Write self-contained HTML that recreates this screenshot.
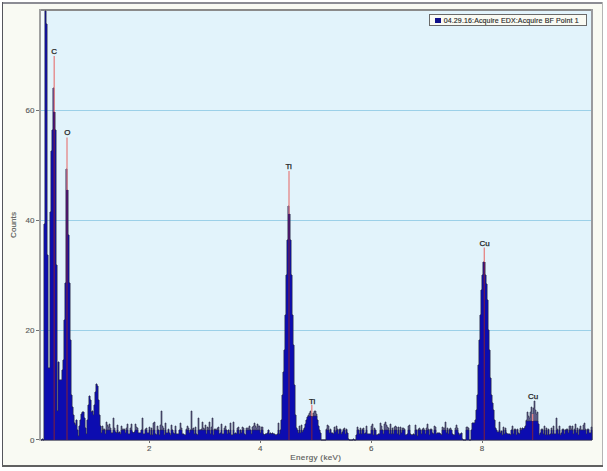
<!DOCTYPE html>
<html><head><meta charset="utf-8"><style>
html,body{margin:0;padding:0;background:#fff;}
body{width:607px;height:471px;position:relative;overflow:hidden;font-family:"Liberation Sans",sans-serif;}
svg{position:absolute;left:0;top:0;}
</style></head><body>
<svg width="607" height="471" viewBox="0 0 607 471" shape-rendering="crispEdges">
<rect x="2" y="2" width="601" height="465" fill="#f9faf3"/>
<rect x="2" y="2" width="601" height="2" fill="#8c8c94"/>
<rect x="2" y="2" width="1" height="465" fill="#55555c"/>
<rect x="602" y="2" width="1" height="465" fill="#b4b4b4"/>
<rect x="2" y="465" width="601" height="2" fill="#606060"/>
<rect x="41" y="11" width="550" height="429" fill="#e2f3fb"/>
<rect x="39" y="9" width="554" height="2" fill="#8a8a8a"/>
<rect x="39" y="9" width="2" height="431" fill="#a0a0a0"/>
<rect x="591" y="9" width="2" height="431" fill="#9a9a9e"/>
<rect x="41" y="11" width="3" height="429" fill="#f4fbfd"/>
<g fill="#9cd0e8"><rect x="41" y="110" width="550" height="1"/><rect x="41" y="220" width="550" height="1"/><rect x="41" y="330" width="550" height="1"/></g>
<g fill="#707070"><rect x="36" y="110" width="3" height="1"/><rect x="36" y="220" width="3" height="1"/><rect x="36" y="330" width="3" height="1"/><rect x="36" y="439" width="3" height="1"/>
<rect x="149" y="440" width="1" height="3"/><rect x="260" y="440" width="1" height="3"/><rect x="371" y="440" width="1" height="3"/><rect x="482" y="440" width="1" height="3"/></g>
<rect x="39" y="440" width="553" height="1" fill="#c4c4c4"/>
<path d="M41,440V440H42V439H43V440H44V224H45V11H46V24H47V255H48V368H49V368H50V212H51V151H52V130H53V88H54V112H55V130H56V265H57V411H58V362H59V380H60V380H61V380H62V370H63V360H64V320H65V283H66V169H67V190H68V235H69V283H70V340H71V395H72V407H73V415H74V423H75V425H76V420H77V430H78V436H79V426H80V420H81V414H82V412H83V412H84V418H85V428H86V434H87V420H88V405H89V396H90V400H91V412H92V411H93V415H94V405H95V392H96V384H97V386H98V400H99V415H100V426H101V433H102V426H103V429H104V429H105V434H106V422H107V425H108V427H109V424H110V428H111V433H112V433H113V418H114V428H115V432H116V433H117V425H118V433H119V432H120V434H121V426H122V429H123V429H124V429H125V433H126V428H127V424H128V434H129V434H130V428H131V424H132V432H133V433H134V432H135V424H136V427H137V428H138V433H139V433H140V433H141V430H142V418H143V434H144V434H145V429H146V428H147V433H148V433H149V427H150V435H151V428H152V435H153V423H154V422H155V434H156V435H157V426H158V430H159V435H160V425H161V411H162V426H163V428H164V435H165V423H166V433H167V433H168V429H169V433H170V435H171V425H172V430H173V433H174V434H175V426H176V434H177V434H178V434H179V430H180V423H181V428H182V434H183V434H184V435H185V435H186V429H187V426H188V428H189V433H190V430H191V411H192V429H193V428H194V434H195V427H196V434H197V435H198V418H199V430H200V430H201V429H202V422H203V428H204V429H205V425H206V434H207V427H208V428H209V422H210V434H211V427H212V418H213V435H214V429H215V429H216V430H217V428H218V427H219V434H220V433H221V424H222V434H223V434H224V428H225V426H226V430H227V434H228V430H229V433H230V423H231V435H232V435H233V422H234V434H235V433H236V434H237V428H238V427H239V434H240V430H241V433H242V427H243V428H244V434H245V435H246V428H247V428H248V428H249V426H250V430H251V434H252V427H253V426H254V423H255V426H256V428H257V424H258V426H259V426H260V433H261V427H262V427H263V434H264V435H265V434H266V434H267V433H268V430H269V434H270V433H271V434H272V433H273V434H274V434H275V435H276V435H277V434H278V423H279V434H280V430H281V420H282V395H283V372H284V350H285V315H286V275H287V240H288V206H289V214H290V240H291V275H292V315H293V345H294V385H295V415H296V428H297V430H298V433H299V426H300V433H301V425H302V432H303V430H304V428H305V424H306V420H307V417H308V415H309V413H310V411H311V413H312V417H313V413H314V411H315V411H316V414H317V420H318V426H319V430H320V433H321V440H322V440H323V440H324V440H325V440H326V429H327V425H328V426H329V433H330V429H331V433H332V433H333V434H334V427H335V432H336V426H337V429H338V434H339V429H340V429H341V434H342V432H343V429H344V428H345V434H346V429H347V433H348V439H349V440H350V440H351V440H352V440H353V439H354V440H355V440H356V435H357V427H358V430H359V434H360V428H361V434H362V429H363V428H364V434H365V433H366V426H367V434H368V434H369V434H370V434H371V426H372V424H373V435H374V428H375V430H376V435H377V435H378V434H379V434H380V423H381V426H382V430H383V434H384V424H385V422H386V425H387V427H388V428H389V434H390V424H391V434H392V428H393V434H394V427H395V426H396V427H397V434H398V427H399V435H400V427H401V433H402V428H403V428H404V429H405V435H406V435H407V434H408V426H409V425H410V434H411V435H412V435H413V434H414V435H415V425H416V430H417V436H418V429H419V428H420V430H421V434H422V429H423V428H424V430H425V434H426V428H427V424H428V429H429V435H430V429H431V429H432V433H433V434H434V426H435V427H436V434H437V433H438V433H439V433H440V434H441V435H442V427H443V428H444V428H445V422H446V433H447V428H448V434H449V429H450V428H451V430H452V434H453V435H454V435H455V428H456V425H457V428H458V433H459V435H460V434H461V433H462V439H463V440H464V440H465V440H466V427H467V427H468V428H469V440H470V440H471V430H472V423H473V423H474V423H475V420H476V410H477V395H478V365H479V340H480V315H481V290H482V275H483V262H484V262H485V275H486V284H487V300H488V330H489V350H490V378H491V395H492V403H493V410H494V420H495V428H496V430H497V432H498V432H499V422H500V433H501V431H502V435H503V427H504V434H505V428H506V433H507V434H508V434H509V434H510V435H511V430H512V426H513V434H514V429H515V429H516V435H517V429H518V433H519V434H520V428H521V430H522V428H523V429H524V428H525V426H526V420H527V412H528V416H529V418H530V412H531V407H532V414H533V408H534V401H535V410H536V414H537V412H538V424H539V435H540V433H541V429H542V429H543V434H544V426H545V435H546V428H547V435H548V429H549V435H550V434H551V428H552V434H553V426H554V434H555V434H556V418H557V429H558V434H559V426H560V435H561V433H562V429H563V429H564V434H565V430H566V429H567V429H568V433H569V426H570V426H571V429H572V426H573V434H574V429H575V424H576V433H577V428H578V435H579V429H580V426H581V430H582V430H583V425H584V423H585V429H586V434H587V429H588V429H589V433H590V433H591V427H592V440Z" fill="#5a5a86" stroke="#2e2e46" stroke-width="0.6" shape-rendering="geometricPrecision"/>
<path d="M41,440V440H42V439H43V440H44V224H45V11H46V24H47V255H48V368H49V368H50V212H51V151H52V130H53V88H54V112H55V130H56V265H57V411H58V362H59V380H60V380H61V380H62V370H63V360H64V320H65V283H66V169H67V190H68V235H69V283H70V340H71V395H72V407H73V415H74V423H75V425H76V420H77V430H78V436H79V426H80V420H81V414H82V412H83V412H84V418H85V428H86V434H87V420H88V405H89V396H90V400H91V412H92V411H93V415H94V405H95V392H96V384H97V386H98V400H99V415H100V426H101V433H102V430H103V430H104V430H105V434H106V430H107V430H108V430H109V430H110V430H111V433H112V433H113V430H114V430H115V432H116V433H117V430H118V433H119V432H120V434H121V430H122V430H123V430H124V430H125V433H126V430H127V430H128V434H129V434H130V430H131V430H132V432H133V433H134V432H135V430H136V430H137V430H138V433H139V433H140V433H141V430H142V430H143V434H144V434H145V430H146V430H147V433H148V433H149V430H150V435H151V430H152V435H153V430H154V430H155V434H156V435H157V430H158V430H159V435H160V430H161V430H162V430H163V430H164V435H165V430H166V433H167V433H168V430H169V433H170V435H171V430H172V430H173V433H174V434H175V430H176V434H177V434H178V434H179V430H180V430H181V430H182V434H183V434H184V435H185V435H186V430H187V430H188V430H189V433H190V430H191V430H192V430H193V430H194V434H195V430H196V434H197V435H198V430H199V430H200V430H201V430H202V430H203V430H204V430H205V430H206V434H207V430H208V430H209V430H210V434H211V430H212V430H213V435H214V430H215V430H216V430H217V430H218V430H219V434H220V433H221V430H222V434H223V434H224V430H225V430H226V430H227V434H228V430H229V433H230V430H231V435H232V435H233V430H234V434H235V433H236V434H237V430H238V430H239V434H240V430H241V433H242V430H243V430H244V434H245V435H246V430H247V430H248V430H249V430H250V430H251V434H252V430H253V430H254V430H255V430H256V430H257V430H258V430H259V430H260V433H261V430H262V430H263V434H264V435H265V434H266V434H267V433H268V430H269V434H270V433H271V434H272V433H273V434H274V434H275V435H276V435H277V434H278V430H279V434H280V430H281V420H282V395H283V372H284V350H285V315H286V275H287V240H288V206H289V214H290V240H291V275H292V315H293V345H294V385H295V415H296V428H297V430H298V433H299V430H300V433H301V430H302V432H303V430H304V428H305V424H306V420H307V417H308V416H309V416H310V416H311V416H312V417H313V416H314V416H315V416H316V416H317V420H318V426H319V430H320V433H321V440H322V440H323V440H324V440H325V440H326V430H327V430H328V430H329V433H330V430H331V433H332V433H333V434H334V430H335V432H336V430H337V430H338V434H339V430H340V430H341V434H342V432H343V430H344V430H345V434H346V430H347V433H348V439H349V440H350V440H351V440H352V440H353V439H354V440H355V440H356V435H357V430H358V430H359V434H360V430H361V434H362V430H363V430H364V434H365V433H366V430H367V434H368V434H369V434H370V434H371V430H372V430H373V435H374V430H375V430H376V435H377V435H378V434H379V434H380V430H381V430H382V430H383V434H384V430H385V430H386V430H387V430H388V430H389V434H390V430H391V434H392V430H393V434H394V430H395V430H396V430H397V434H398V430H399V435H400V430H401V433H402V430H403V430H404V430H405V435H406V435H407V434H408V430H409V430H410V434H411V435H412V435H413V434H414V435H415V430H416V430H417V436H418V430H419V430H420V430H421V434H422V430H423V430H424V430H425V434H426V430H427V430H428V430H429V435H430V430H431V430H432V433H433V434H434V430H435V430H436V434H437V433H438V433H439V433H440V434H441V435H442V430H443V430H444V430H445V430H446V433H447V430H448V434H449V430H450V430H451V430H452V434H453V435H454V435H455V430H456V430H457V430H458V433H459V435H460V434H461V433H462V439H463V440H464V440H465V440H466V430H467V430H468V430H469V440H470V440H471V430H472V423H473V423H474V423H475V420H476V410H477V395H478V365H479V340H480V315H481V290H482V275H483V262H484V262H485V275H486V284H487V300H488V330H489V350H490V378H491V395H492V403H493V410H494V420H495V428H496V430H497V432H498V432H499V430H500V433H501V431H502V435H503V430H504V434H505V430H506V433H507V434H508V434H509V434H510V435H511V430H512V430H513V434H514V430H515V430H516V435H517V430H518V433H519V434H520V430H521V430H522V428H523V429H524V428H525V426H526V421H527V421H528V421H529V421H530V421H531V421H532V421H533V421H534V421H535V421H536V421H537V421H538V424H539V435H540V433H541V430H542V430H543V434H544V430H545V435H546V430H547V435H548V430H549V435H550V434H551V430H552V434H553V430H554V434H555V434H556V430H557V430H558V434H559V430H560V435H561V433H562V430H563V430H564V434H565V430H566V430H567V430H568V433H569V430H570V430H571V430H572V430H573V434H574V430H575V430H576V433H577V430H578V435H579V430H580V430H581V430H582V430H583V430H584V430H585V430H586V434H587V430H588V430H589V433H590V433H591V430H592V440Z" fill="#0c0cb0" stroke="#24244a" stroke-width="0.5" shape-rendering="geometricPrecision"/>
<g stroke-width="1.3" shape-rendering="geometricPrecision"><line x1="54.2" y1="56" x2="54.2" y2="112" stroke="#e58484"/><line x1="54.2" y1="112" x2="54.2" y2="440" stroke="#6a1c50"/><line x1="67.0" y1="137.5" x2="67.0" y2="190" stroke="#e58484"/><line x1="67.0" y1="190" x2="67.0" y2="440" stroke="#6a1c50"/><line x1="289" y1="171" x2="289" y2="214" stroke="#e58484"/><line x1="289" y1="214" x2="289" y2="440" stroke="#6a1c50"/><line x1="311.8" y1="405" x2="311.8" y2="416" stroke="#e58484"/><line x1="311.8" y1="416" x2="311.8" y2="440" stroke="#6a1c50"/><line x1="484.3" y1="247.5" x2="484.3" y2="262" stroke="#e58484"/><line x1="484.3" y1="262" x2="484.3" y2="440" stroke="#6a1c50"/><line x1="532.6" y1="414" x2="532.6" y2="421" stroke="#e58484"/><line x1="532.6" y1="421" x2="532.6" y2="440" stroke="#6a1c50"/></g>
<g font-family="Liberation Sans" font-size="8" fill="#202020" stroke="#202020" stroke-width="0.25" text-anchor="middle"><text x="54.1" y="53.6">C</text><text x="67.3" y="135">O</text><text x="288.6" y="168.9">Ti</text><text x="312.1" y="404.2">Ti</text><text x="484.7" y="245.9">Cu</text><text x="533" y="398.8">Cu</text></g>
<g font-family="Liberation Sans" font-size="8" fill="#5a5a5a" stroke="#5a5a5a" stroke-width="0.15" text-anchor="end">
<text x="34.5" y="442.5">0</text><text x="34.5" y="333">20</text><text x="34.5" y="223">40</text><text x="34.5" y="113">60</text>
</g>
<g font-family="Liberation Sans" font-size="8" fill="#5a5a5a" stroke="#5a5a5a" stroke-width="0.15" text-anchor="middle">
<text x="149.3" y="451">2</text><text x="260.3" y="451">4</text><text x="371.3" y="451">6</text><text x="482" y="451">8</text>
<text x="315.8" y="460" letter-spacing="0.35">Energy (keV)</text>
<text transform="translate(15.6,225) rotate(-90)" letter-spacing="0.1">Counts</text>
</g>
<rect x="429.5" y="14.5" width="157" height="11" fill="#f9faf3" stroke="#6a6a6a" stroke-width="1.2"/>
<rect x="435" y="18" width="6" height="5" fill="#10108a"/>
<text x="443.7" y="23" font-family="Liberation Sans" font-size="7" fill="#2a2a2a" stroke="#2a2a2a" stroke-width="0.15" letter-spacing="0.14">04.29.16:Acquire EDX:Acquire BF Point 1</text>
</svg>
</body></html>
